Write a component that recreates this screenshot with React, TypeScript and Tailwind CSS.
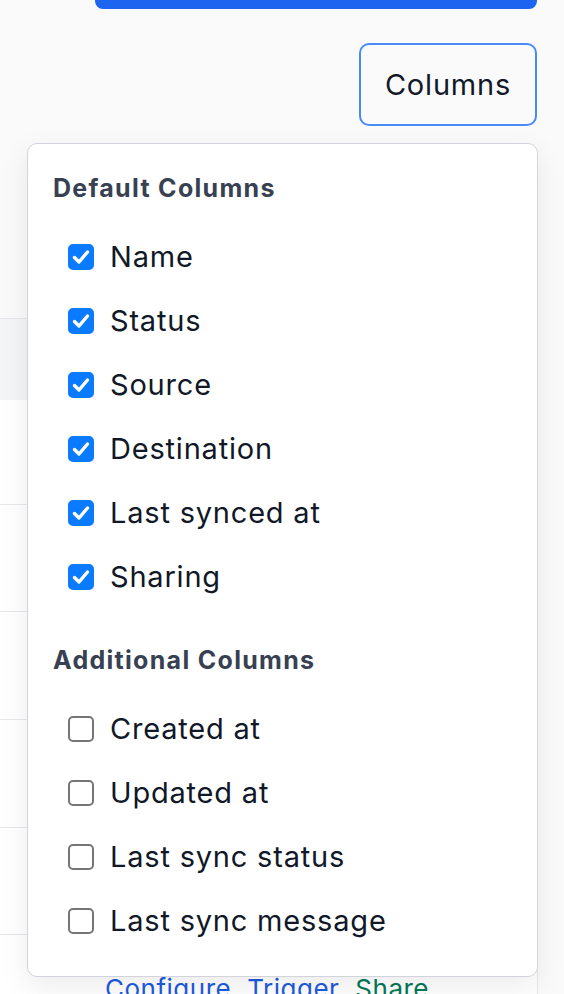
import React from "react";

const defaultCols = ["Name", "Status", "Source", "Destination", "Last synced at", "Sharing"];
const extraCols = ["Created at", "Updated at", "Last sync status", "Last sync message"];

function Box({ checked }: { checked: boolean }) {
  if (checked) {
    return (
      <span className="flex h-[26px] w-[26px] shrink-0 items-center justify-center rounded-[5px] bg-[#0a7aff]">
        <svg viewBox="0 0 26 26" className="h-[26px] w-[26px]">
          <path d="M6.5 13.5 L11 18 L19.5 8" fill="none" stroke="white" strokeWidth="3.4" strokeLinecap="round" strokeLinejoin="round" />
        </svg>
      </span>
    );
  }
  return <span className="h-[26px] w-[26px] shrink-0 rounded-[5px] border-2 border-[#767676] bg-white" />;
}

function Item({ label, checked }: { label: string; checked: boolean }) {
  return (
    <label className="flex h-[64px] items-center gap-[16px] pl-[15px]">
      <Box checked={checked} />
      <span className="text-[29px] leading-[36px] tracking-[0.8px] text-[#111827]">{label}</span>
    </label>
  );
}

export default function App() {
  return (
    <div
      className="relative h-[994px] w-[564px] overflow-hidden bg-[#fafafa]"
      style={{ fontFamily: "Inter, 'Noto Sans', sans-serif" }}
    >
      {/* primary action, cut off at top */}
      <div className="ml-[95px] h-[9px] w-[442px] rounded-b-[8px] bg-[#1d64f0]" />

      <div className="mt-[34px] flex justify-end pr-[27px]">
        <button className="h-[83px] w-[178px] rounded-[10px] border-2 border-[#4a8af4] bg-[#fafafa] text-[29px] tracking-[0.8px] text-[#111827]">
          Columns
        </button>
      </div>

      {/* table behind the menu */}
      <div className="mt-[192px] w-[538px] border-r border-t border-[#e5e7eb]">
        <div className="h-[81px] border-b border-[#f3f4f6] bg-[#f4f5f7]" />
        <div className="h-[105px] border-b border-[#e5e7eb] bg-white" />
        <div className="h-[107px] border-b border-[#e5e7eb] bg-white" />
        <div className="h-[108px] border-b border-[#e5e7eb] bg-white" />
        <div className="h-[108px] border-b border-[#e5e7eb] bg-white" />
        <div className="h-[107px] border-b border-[#e5e7eb] bg-white" />
        <div className="flex h-[107px] items-center gap-[16px] bg-white pl-[105px] text-[26px] leading-[36px] tracking-[0.5px]">
          <a className="text-[#1d5ae0]">Configure</a>
          <a className="text-[#1d5ae0]">Trigger</a>
          <a className="text-[#047857]">Share</a>
        </div>
      </div>

      {/* columns dropdown */}
      <div className="absolute left-[27px] top-[143px] h-[834px] w-[511px] rounded-[10px] border border-[#d1d5db] bg-white px-[25px] pt-[26px] shadow-[0_10px_30px_rgba(0,0,0,0.08)]">
        <h4 className="text-[25px] font-bold leading-[36px] tracking-[1.3px] text-[#374151]">Default Columns</h4>
        <div className="mt-[19px]">
          {defaultCols.map((c) => (
            <Item key={c} label={c} checked />
          ))}
        </div>
        <h4 className="mt-[33px] text-[25px] font-bold leading-[36px] tracking-[1.3px] text-[#374151]">Additional Columns</h4>
        <div className="mt-[19px]">
          {extraCols.map((c) => (
            <Item key={c} label={c} checked={false} />
          ))}
        </div>
      </div>
    </div>
  );
}
